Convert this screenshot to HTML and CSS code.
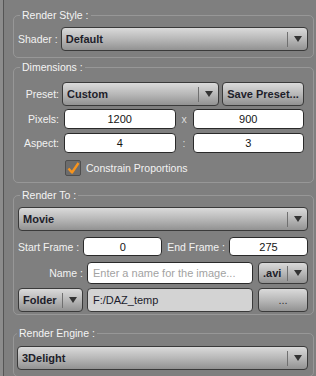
FILE: index.html
```html
<!DOCTYPE html>
<html>
<head>
    <title>Render Settings</title>
    <link rel="stylesheet" href="styles.css">
</head>
<body>
    <div class="panel">
        <fieldset class="group style-group">
            <legend>Render Style :</legend>
            <div class="row">
                <span class="lbl">Shader :</span>
                <div class="combo grow"><span class="val">Default</span><span class="arrow"></span></div>
            </div>
        </fieldset>

        <fieldset class="group dim-group">
            <legend>Dimensions :</legend>
            <div class="row">
                <span class="lbl right">Preset:</span>
                <div class="combo grow"><span class="val">Custom</span><span class="arrow"></span></div>
                <button class="btn save">Save Preset...</button>
            </div>
            <div class="row field-row">
                <span class="lbl right">Pixels:</span>
                <div class="pair">
                    <input type="text" value="1200">
                    <span class="sep">x</span>
                    <input type="text" value="900">
                </div>
            </div>
            <div class="row field-row">
                <span class="lbl right">Aspect:</span>
                <div class="pair">
                    <input type="text" value="4">
                    <span class="sep">:</span>
                    <input type="text" value="3">
                </div>
            </div>
            <label class="check">
                <span class="box">
                    <svg width="14" height="14" viewBox="0 0 14 14"><polyline points="2.5,7.5 6,11.5 12.5,2" fill="none" stroke="#f7941d" stroke-width="2.4" stroke-linejoin="round"/></svg>
                </span>
                Constrain Proportions
            </label>
        </fieldset>

        <fieldset class="group to-group">
            <legend>Render To :</legend>
            <div class="combo"><span class="val">Movie</span><span class="arrow"></span></div>
            <div class="row frames">
                <span class="lbl">Start Frame :</span>
                <input type="text" value="0">
                <span class="lbl end-lbl">End Frame :</span>
                <input type="text" value="275">
            </div>
            <div class="row name-row">
                <span class="lbl name-lbl">Name :</span>
                <input type="text" class="name" placeholder="Enter a name for the image...">
                <div class="combo last-col"><span class="val">.avi</span><span class="arrow"></span></div>
            </div>
            <div class="row folder-row">
                <div class="combo first-col"><span class="val">Folder</span><span class="arrow"></span></div>
                <div class="path">F:/DAZ_temp</div>
                <button class="btn dots last-col">...</button>
            </div>
        </fieldset>

        <fieldset class="group engine-group">
            <legend>Render Engine :</legend>
            <div class="combo"><span class="val">3Delight</span><span class="arrow"></span></div>
        </fieldset>
    </div>
</body>
</html>
```

FILE: styles.css
```css
body { margin: 0; background: #8c8c8c; font-family: "Liberation Sans", Arial, sans-serif; font-size: 10.5px; color: #f2f2f2; }
.panel { margin-left: 3px; border-left: 1px solid #555; background: #7f7f7f; height: 376px; overflow: hidden; padding-top: 1px; box-sizing: border-box; }

.group { margin: 3px 2px 0 9px; padding: 5px 5px 6px 4px; border: 1px solid #979797; border-radius: 5px; min-width: 0; }
.group legend { padding: 0 2px; margin-left: 2px; line-height: 13px; color: #f4f4f4; }
.style-group { margin-top: 8px; }
.dim-group { padding: 8px 9px 6px 4px; }
.to-group { margin-top: 6px; padding-bottom: 2px; }
.engine-group { margin-top: 12px; padding-top: 6px; }
.engine-group legend { margin-left: -1px; }
.engine-group .combo { margin-left: -1px; }

.row { display: flex; align-items: center; }
.lbl { white-space: nowrap; margin-right: 3px; }
.lbl.right { width: 41px; text-align: right; }
.grow { flex: 1; }

.combo { display: flex; align-items: center; height: 24px; box-sizing: border-box; padding-left: 4px; border: 1px solid #3a3a3a; border-radius: 4px; background: linear-gradient(#dadada, #b8b8b8 50%, #929292); color: #1e1e2a; font-size: 11px; font-weight: bold; }
.combo .val { flex: 1; white-space: nowrap; overflow: hidden; }
.arrow { width: 19px; height: 15px; border-left: 1px solid #707070; display: flex; align-items: center; justify-content: center; }
.arrow::after { content: ""; border-left: 4px solid transparent; border-right: 4px solid transparent; border-top: 6px solid #333; }

.btn { height: 24px; box-sizing: border-box; border: 1px solid #3a3a3a; border-radius: 4px; background: linear-gradient(#dadada, #b8b8b8 50%, #929292); color: #1e1e2a; font: bold 11px "Liberation Sans", Arial, sans-serif; padding: 0; }
.save { width: 82px; margin-left: 3px; }
.dots { font-weight: normal; color: #333; }

input { height: 20px; box-sizing: border-box; border: 1px solid #2a2a2a; border-radius: 4px; background: #fff; color: #151515; text-align: center; font: 11px "Liberation Sans", Arial, sans-serif; padding: 0; min-width: 0; width: 0; flex: 1; }
input::placeholder { color: #a2a2a2; }

.field-row { margin-top: 3px; }
.field-row + .field-row { margin-top: 4px; }
.pair { flex: 1; display: flex; align-items: center; padding-left: 2px; }
.sep { width: 17px; text-align: center; color: #ddd; }

.check { display: flex; align-items: center; margin: 7px 0 0 47px; }
.box { width: 16px; height: 16px; box-sizing: border-box; border: 1px solid #4e4e4e; border-radius: 2px; background: #6c6c6c; display: flex; align-items: center; justify-content: center; margin-right: 5px; }

.frames { margin-top: 6px; }
.frames input { height: 19px; }
.frames .lbl { margin-right: 4px; }
.end-lbl { margin-left: 5px; }

.name-row { margin-top: 6px; }
.name-lbl { width: 65px; margin-right: 4px; text-align: right; flex: none; }
.name-row input { height: 22px; text-align: left; padding-left: 5px; }
.name-row .combo { height: 22px; }
.folder-row { margin-top: 4px; }
.first-col { width: 65px; margin-right: 4px; flex: none; }
.last-col { width: 50px; margin-left: 5px; flex: none; }
.path { flex: 1; height: 24px; box-sizing: border-box; border: 1px solid #3a3a3a; border-radius: 4px; background: #d3d3d3; color: #1c1c2c; padding-left: 5px; line-height: 22px; font-size: 11px; }
```
